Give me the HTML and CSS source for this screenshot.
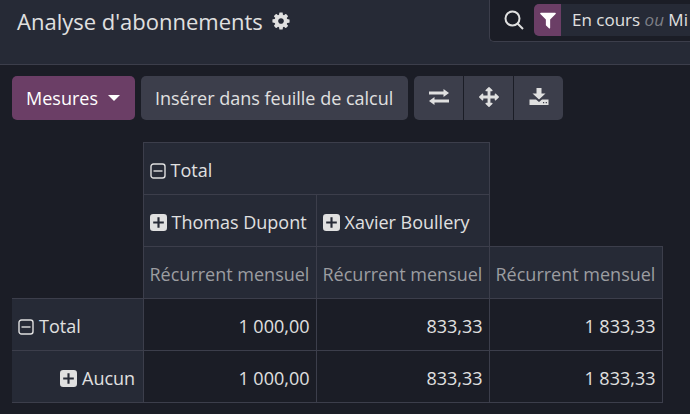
FILE: index.html
```html
<!DOCTYPE html>
<html lang="fr">
    <head>
        <meta charset="UTF-8">
        <meta name="viewport" content="width=device-width, initial-scale=1.0">
        <title>Analyse d'abonnements</title>
        <link rel="stylesheet" href="styles.css">
    </head>

    <body>
        <!-- shared icons -->
        <svg class="sprite" aria-hidden="true">
            <symbol id="plus" viewBox="0 0 16 16">
                <path fill="currentColor" fill-rule="evenodd" d="M3 0h10a3 3 0 0 1 3 3v10a3 3 0 0 1-3 3H3a3 3 0 0 1-3-3V3a3 3 0 0 1 3-3zM7 3v4H3v2h4v4h2V9h4V7H9V3z"/>
            </symbol>
            <symbol id="minus" viewBox="0 0 16 16">
                <rect x="1" y="1" width="14" height="14" rx="2.500" fill="none" stroke="currentColor" stroke-width="1.400"/>
                <path d="M3.500 8h9" stroke="currentColor" stroke-width="1.400"/>
            </symbol>
        </svg>

        <header class="control-panel">
            <h1 class="title">Analyse d'abonnements</h1>
            <button class="cog" type="button" aria-label="Actions">
                <svg width="20" height="20" viewBox="0 0 1792 1792"><path fill="currentColor" d="M1152 896q0-106-75-181t-181-75-181 75-75 181 75 181 181 75 181-75 75-181zm512-109v222q0 12-8 23t-20 13l-185 28q-19 54-39 91 35 50 107 138 10 12 10 25t-9 23q-27 37-99 108t-94 71q-12 0-26-9l-138-108q-44 23-91 38-16 136-29 186-7 28-36 28h-222q-14 0-24.500-8.500t-11.500-21.500l-28-184q-49-16-90-37l-141 107q-10 9-25 9-14 0-25-11-126-114-165-168-7-10-7-23 0-12 8-23 15-21 51-66.500t54-70.500q-27-50-41-99l-183-27q-13-2-21-12.500t-8-23.500v-222q0-12 8-23t19-13l186-28q14-46 39-92-40-57-107-138-10-12-10-24 0-10 9-23 26-36 98.500-107.500t94.500-71.500q13 0 26 10l138 107q44-23 91-38 16-136 29-186 7-28 36-28h222q14 0 24.500 8.500t11.500 21.500l28 184q49 16 90 37l142-107q9-9 24-9 13 0 25 10 129 119 165 170 7 8 7 22 0 12-8 23-15 21-51 66.500t-54 70.500q26 50 41 98l183 28q13 2 21 12.500t8 23.500z"/></svg>
            </button>
            <div class="search">
                <svg class="search-icon" width="20" height="20" viewBox="0 0 20 20" fill="none" stroke="currentColor" stroke-width="2"><circle cx="8.500" cy="8.500" r="7"/><path d="M13.500 13.500l5.500 5.500"/></svg>
                <div class="facet">
                    <span class="facet-icon">
                        <svg width="20" height="20" viewBox="0 0 1792 1792"><path fill="currentColor" d="M1595 295q17 41-14 70l-493 493v742q0 42-39 59-13 5-25 5-27 0-45-19l-256-256q-19-19-19-45v-486l-493-493q-31-29-14-70 17-39 59-39h1280q42 0 59 39z"/></svg>
                    </span>
                    <span class="facet-label">En cours <em>ou</em> Mi</span>
                </div>
            </div>
        </header>

        <main class="content">
            <div class="toolbar">
                <button class="btn btn-primary" type="button">Mesures <span class="caret"></span></button>
                <button class="btn" type="button">Insérer dans feuille de calcul</button>
                <div class="btn-group">
                    <button class="btn btn-icon" type="button" aria-label="Inverser les axes">
                        <svg width="20" height="20" viewBox="0 0 20 20" fill="currentColor"><path d="M0 4.500h14.500V2L20 6l-5.500 4V7.500H0zM20 12.500H5.500V10L0 14l5.500 4v-2.500H20z"/></svg>
                    </button>
                    <button class="btn btn-icon" type="button" aria-label="Tout développer">
                        <svg width="20" height="20" viewBox="0 0 1792 1792"><path fill="currentColor" d="M1792 896q0 26-19 45l-256 256q-19 19-45 19t-45-19-19-45v-128h-384v384h128q26 0 45 19t19 45-19 45l-256 256q-19 19-45 19t-45-19l-256-256q-19-19-19-45t19-45 45-19h128v-384h-384v128q0 26-19 45t-45 19-45-19l-256-256q-19-19-19-45t19-45l256-256q19-19 45-19t45 19 19 45v128h384v-384h-128q-26 0-45-19t-19-45 19-45l256-256q19-19 45-19t45 19l256 256q19 19 19 45t-19 45-45 19h-128v384h384v-128q0-26 19-45t45-19 45 19l256 256q19 19 19 45z"/></svg>
                    </button>
                    <button class="btn btn-icon" type="button" aria-label="Télécharger xlsx">
                        <svg width="20" height="20" viewBox="0 0 20 20" fill="currentColor"><path d="M7.500 1h5v5.500h4L10 12.500 3.500 6.500h4z"/><path fill-rule="evenodd" d="M.5 12.500H7l3 2.500 3-2.500h6.500V18H.5zM14 15v1.200h1.200V15zM16.700 15v1.200h1.200V15z"/></svg>
                    </button>
                </div>
            </div>

            <table class="pivot">
                <thead>
                    <tr>
                        <td class="empty" rowspan="3"></td>
                        <th colspan="2"><svg class="toggle"><use href="#minus"/></svg>Total</th>
                        <td class="empty" rowspan="2"></td>
                    </tr>
                    <tr>
                        <th><svg class="toggle toggle-plus"><use href="#plus"/></svg>Thomas Dupont</th>
                        <th><svg class="toggle toggle-plus"><use href="#plus"/></svg>Xavier Boullery</th>
                    </tr>
                    <tr>
                        <th class="measure">Récurrent mensuel</th>
                        <th class="measure">Récurrent mensuel</th>
                        <th class="measure">Récurrent mensuel</th>
                    </tr>
                </thead>
                <tbody>
                    <tr>
                        <th class="row-head"><svg class="toggle"><use href="#minus"/></svg>Total</th>
                        <td>1 000,00</td>
                        <td>833,33</td>
                        <td>1 833,33</td>
                    </tr>
                    <tr>
                        <th class="row-head child"><svg class="toggle toggle-plus"><use href="#plus"/></svg>Aucun</th>
                        <td>1 000,00</td>
                        <td>833,33</td>
                        <td>1 833,33</td>
                    </tr>
                </tbody>
            </table>
        </main>
    </body>
</html>
```
FILE: styles.css
```css
* {
    box-sizing: border-box;
}

body {
    margin: 0;
    background-color: #1b1d26;
    color: #e0e0e0;
    font-family: "Segoe UI", "Open Sans", sans-serif;
    font-size: 18px;
    line-height: 28px;
    overflow: hidden;
}

svg {
    display: block;
}

.sprite {
    display: none;
}

.control-panel {
    display: flex;
    align-items: flex-start;
    height: 65px;
    padding-left: 17px;
    background-color: #262a36;
    border-bottom: 1px solid #3c3e4b;
    white-space: nowrap;
}

.title {
    margin: 0;
    font-size: 22px;
    font-weight: 400;
    line-height: 42px;
}

.cog {
    margin-left: 8px;
    padding: 11px 0;
    background: none;
    border: none;
    color: inherit;
    cursor: pointer;
}

.search {
    display: flex;
    flex: 0 0 201px;
    gap: 10px;
    height: 42px;
    margin-left: auto;
    padding: 4px 0 5px 14px;
    overflow: hidden;
    background-color: #1b1d26;
    border: 1px solid #3c3e4b;
    border-width: 0 0 1px 1px;
    border-radius: 0 0 0 5px;
}

.search-icon {
    flex: none;
    margin-top: 6px;
}

.facet {
    display: flex;
    flex: 1 0 auto;
    background-color: #262a36;
    border-radius: 5px;
    overflow: hidden;
    line-height: 32px;
}

.facet-icon {
    display: flex;
    align-items: center;
    justify-content: center;
    width: 27px;
    background-color: #6b3e66;
    color: #ffffff;
}

.facet-label {
    padding: 0 11px;
    font-size: 17px;
}

.facet-label em {
    color: #7d7f86;
}

.content {
    padding: 11px 12px;
}

.toolbar {
    display: flex;
    gap: 6px;
    margin-bottom: 22px;
}

.btn {
    display: flex;
    align-items: center;
    justify-content: center;
    height: 44px;
    padding: 0 15px 0 14px;
    background-color: #3c3e4b;
    border: none;
    border-radius: 5px;
    color: inherit;
    font: inherit;
    white-space: nowrap;
    cursor: pointer;
}

.btn-primary {
    background-color: #6b3e66;
    color: #ffffff;
}

.caret {
    margin-left: 10px;
    border: 6px solid transparent;
    border-top-color: #ffffff;
    border-bottom: none;
}

.btn-group {
    display: flex;
    gap: 1px;
}

.btn-icon {
    width: 49px;
    padding: 0 0 2px;
    border-radius: 0;
}

.btn-icon:first-child {
    border-radius: 5px 0 0 5px;
}

.btn-icon:last-child {
    border-radius: 0 5px 5px 0;
}

.pivot {
    border-collapse: collapse;
    white-space: nowrap;
}

.pivot th,
.pivot td {
    height: 52px;
    min-width: 173px;
    padding: 2px 6px 0;
    border: 1px solid #3c3e4b;
    font-weight: 400;
    text-align: right;
}

.pivot th {
    background-color: #262a36;
    text-align: left;
}

.pivot .empty {
    min-width: 0;
    border: none;
}

.pivot .measure {
    color: #9c9da1;
}

.pivot .row-head {
    min-width: 131px;
    border-left: none;
}

.pivot .child {
    padding-left: 48px;
}

.toggle {
    display: inline-block;
    width: 16px;
    height: 16px;
    margin-right: 5px;
    vertical-align: -2px;
}

.toggle-plus {
    width: 17px;
    height: 17px;
}
```
